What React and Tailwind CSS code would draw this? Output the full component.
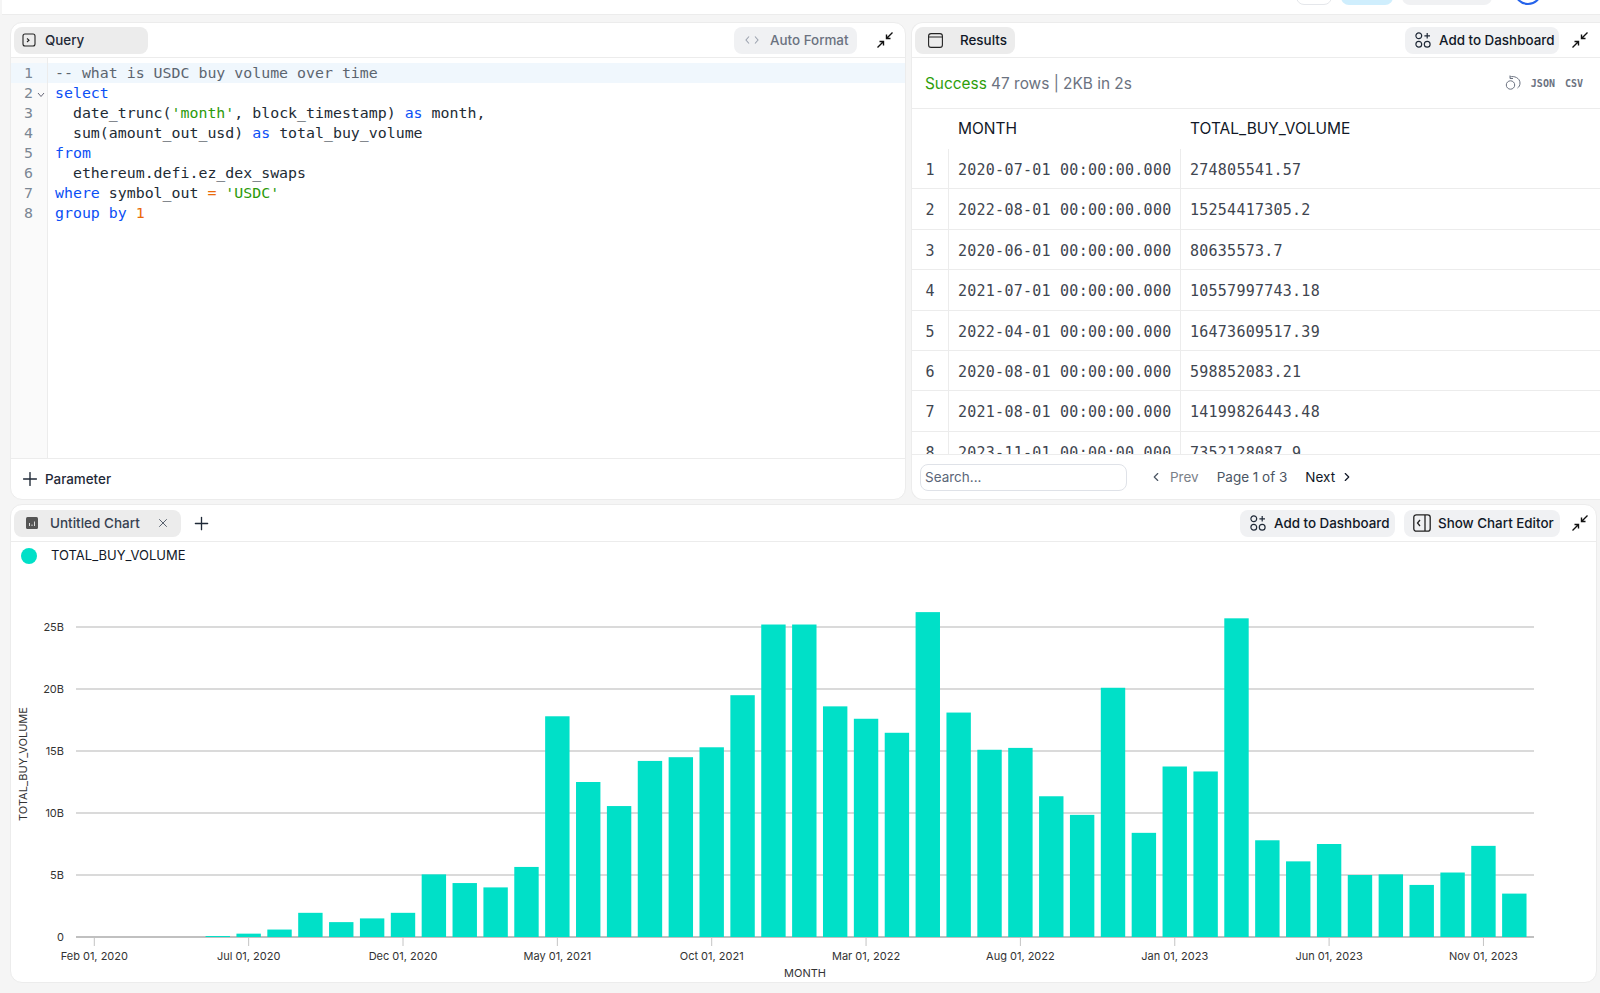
import { Plus, X, ChevronLeft, ChevronRight } from 'lucide-react';

const mono = "font-['DejaVu_Sans_Mono',monospace]";

const BARS = [
  0, 0, 0, 0, 0.08, 0.27, 0.6, 1.95, 1.2, 1.5, 1.95, 5.05, 4.35, 4.0, 5.65, 17.8, 12.5, 10.56, 14.2, 14.5, 15.3, 19.5, 25.2, 25.2,
  18.6, 17.6, 16.47, 26.2, 18.1, 15.1, 15.25, 11.35, 9.85, 20.1, 8.4, 13.75, 13.35, 25.7, 7.8, 6.1, 7.5, 5.0, 5.05, 4.2, 5.2, 7.35, 3.5,
];

const XLABELS = [
  ['Feb 01, 2020', 0], ['Jul 01, 2020', 5], ['Dec 01, 2020', 10], ['May 01, 2021', 15], ['Oct 01, 2021', 20],
  ['Mar 01, 2022', 25], ['Aug 01, 2022', 30], ['Jan 01, 2023', 35], ['Jun 01, 2023', 40], ['Nov 01, 2023', 45],
];

const ROWS = [
  ['2020-07-01 00:00:00.000', '274805541.57'],
  ['2022-08-01 00:00:00.000', '15254417305.2'],
  ['2020-06-01 00:00:00.000', '80635573.7'],
  ['2021-07-01 00:00:00.000', '10557997743.18'],
  ['2022-04-01 00:00:00.000', '16473609517.39'],
  ['2020-08-01 00:00:00.000', '598852083.21'],
  ['2021-08-01 00:00:00.000', '14199826443.48'],
  ['2023-11-01 00:00:00.000', '7352128087.9'],
];

const kw = 'text-[#0b4ff5]';
const str = 'text-[#2b9a0a]';
const op = 'text-[#ea6a0a]';

const CODE = [
  [['-- what is USDC buy volume over time', 'text-[#5c6570]']],
  [['select', kw]],
  [['  date_trunc('], ["'month'", str], [', block_timestamp) '], ['as', kw], [' month,']],
  [['  sum(amount_out_usd) '], ['as', kw], [' total_buy_volume']],
  [['from', kw]],
  [['  ethereum.defi.ez_dex_swaps']],
  [['where', kw], [' symbol_out '], ['=', op], [' '], ["'USDC'", str]],
  [['group by', kw], [' '], ['1', op]],
];

const Collapse = () => (
  <svg width="16" height="16" viewBox="0 0 16 16" fill="none" stroke="#111" strokeWidth="1.4" className="shrink-0">
    <path d="M15.5 0.5 L9.5 6.5 M9.5 2.5 V6.5 H13.5" />
    <path d="M0.5 15.5 L6.5 9.5 M2.5 9.5 H6.5 V13.5" />
  </svg>
);

const DashIcon = () => (
  <svg width="16" height="16" viewBox="0 0 16 16" fill="none" stroke="#1f2937" strokeWidth="1.2" className="shrink-0">
    <circle cx="3.8" cy="3.8" r="2.9" />
    <circle cx="3.8" cy="12.2" r="2.9" />
    <circle cx="12.2" cy="12.2" r="2.9" />
    <path d="M12.2 1 V6.6 M9.4 3.8 H15" />
  </svg>
);

const Btn = ({ children, className = '' }) => (
  <div className={`flex h-[27px] items-center rounded-lg bg-[#f0f1f3] text-[13.4px] font-medium text-[#111827] ${className}`}>{children}</div>
);

const QueryPanel = () => (
  <section className="flex h-[478px] w-[896px] shrink-0 flex-col overflow-hidden rounded-xl border border-[#ececec] bg-white">
    <header className="flex h-[35px] shrink-0 items-center justify-between border-b border-[#ececec] pl-[3px] pr-[12px]">
      <div className="flex h-[27px] w-[134px] items-center gap-[9px] rounded-lg bg-[#ececec] pl-[8px] text-[13.4px] font-medium text-[#1f2937]">
        <svg width="14" height="14" viewBox="0 0 14 14" fill="none" stroke="#222" strokeWidth="1.1">
          <rect x="1" y="1" width="12" height="12" rx="2" />
          <path d="M5 5.5 L7 7.2 L5 9" />
        </svg>
        Query
      </div>
      <div className="flex items-center gap-[20px]">
        <Btn className="w-[123px] gap-[11px] pl-[11px] text-[#6b7280]">
          <svg width="14" height="10" viewBox="0 0 14 10" fill="none" stroke="#9ca3af" strokeWidth="1.1">
            <path d="M4 1.5 L1 5 L4 8.5 M10 1.5 L13 5 L10 8.5" />
          </svg>
          <span className="text-[#6b7280]">Auto Format</span>
        </Btn>
        <Collapse />
      </div>
    </header>
    <div className="flex min-h-0 flex-1">
      <div className="w-[37px] shrink-0 border-r border-[#ececec] bg-[#fafafa] pt-[5px]">
        {CODE.map((_, i) => (
          <div key={i} className={`relative h-[20px] pr-[14px] text-right text-[14.9px] leading-[20px] text-[#7b8794] ${mono} ${i === 0 ? 'bg-[#f0f7fd]' : ''}`}>
            {i + 1}
            {i === 1 && (
              <svg width="8" height="6" viewBox="0 0 8 6" fill="none" stroke="#667" strokeWidth="1" className="absolute right-[2px] top-[9px]">
                <path d="M1 1 L4 4.5 L7 1" />
              </svg>
            )}
          </div>
        ))}
      </div>
      <div className="min-w-0 flex-1 pt-[5px]">
        {CODE.map((line, i) => (
          <div key={i} className={`h-[20px] whitespace-pre pl-[7px] text-[14.9px] leading-[20px] text-[#222b35] ${mono} ${i === 0 ? 'bg-[#f0f7fd]' : ''}`}>
            {line.map(([t, c], j) => (
              <span key={j} className={c}>{t}</span>
            ))}
          </div>
        ))}
      </div>
    </div>
    <footer className="flex h-[41px] shrink-0 items-center gap-[4px] border-t border-[#ececec] pl-[8px] text-[13.4px] font-medium text-[#1f2937]">
      <Plus size={22} strokeWidth={1.5} />
      Parameter
    </footer>
  </section>
);

const ResultsPanel = () => (
  <section className="flex h-[478px] min-w-0 flex-1 flex-col overflow-hidden rounded-l-xl border border-r-0 border-[#ececec] bg-white">
    <header className="flex h-[35px] shrink-0 items-center justify-between border-b border-[#ececec] pl-[3px] pr-[12px]">
      <div className="flex h-[27px] w-[100px] items-center gap-[17px] rounded-lg bg-[#ececec] pl-[13px] text-[13.4px] font-medium text-[#111827]">
        <svg width="15" height="15" viewBox="0 0 15 15" fill="none" stroke="#222" strokeWidth="1.1">
          <rect x="0.6" y="0.6" width="13.8" height="13.8" rx="2.5" />
          <path d="M0.6 4 H14.4" />
        </svg>
        Results
      </div>
      <div className="flex items-center gap-[13px]">
        <Btn className="w-[154px] gap-2 pl-[10px]">
          <DashIcon />
          Add to Dashboard
        </Btn>
        <Collapse />
      </div>
    </header>
    <div className="flex h-[51px] shrink-0 items-center justify-between border-b border-[#ececec] pl-[13px] pr-[17px]">
      <div className="pt-[1px] text-[15.4px] text-[#6b7280]">
        <span className="text-[#2e9e0b]">Success</span> 47 rows | 2KB in 2s
      </div>
      <div className="flex items-center gap-[10px] text-[#6b7280]">
        <svg width="16" height="16" viewBox="0 0 16 16" fill="none" stroke="#6b7280" strokeWidth="1">
          <path d="M5 2 C9 0.5 15 3 15 8 C15 10.5 14 12 12.5 13" />
          <path d="M5 0.5 V3.5 H8" />
          <circle cx="5.5" cy="10" r="4.2" />
        </svg>
        <span className={`text-[10px] font-bold ${mono}`}>JSON</span>
        <span className={`text-[10px] font-bold ${mono}`}>CSV</span>
      </div>
    </div>
    <div className="min-h-0 flex-1 overflow-hidden">
      <div className="grid h-[40px] grid-cols-[36px_232px_1fr] items-center text-[15.5px] text-[#111827]">
        <span />
        <span className="pl-[10px]">MONTH</span>
        <span className="pl-[10px]">TOTAL_BUY_VOLUME</span>
      </div>
      {ROWS.map((r, i) => (
        <div key={i} className={`grid h-[40.4px] grid-cols-[36px_232px_1fr] border-b border-[#ececec] pt-[3px] text-[15px] text-[#3f4650] ${mono}`}>
          <span className="flex items-center justify-center">{i + 1}</span>
          <span className="-mt-[3px] flex items-center border-l border-[#ececec] pl-[9px] pt-[3px] tracking-[0.25px]">{r[0]}</span>
          <span className="-mt-[3px] flex items-center border-l border-[#ececec] pl-[9px] pt-[3px] tracking-[0.25px]">{r[1]}</span>
        </div>
      ))}
    </div>
    <footer className="flex h-[45px] shrink-0 items-center border-t border-[#ececec] pl-[8px] text-[13.5px]">
      <input
        readOnly
        placeholder="Search..."
        className="h-[27px] w-[207px] rounded-lg border border-[#dfe2e8] pb-[1px] pl-[4px] text-[13.5px] placeholder:text-[#5b6678]"
      />
      <ChevronLeft size={14} className="ml-[22px] text-[#4b5563]" />
      <span className="ml-[7px] text-[#7b8088]">Prev</span>
      <span className="ml-[18px] text-[#4b5563]">Page 1 of 3</span>
      <span className="ml-[18px] text-[#111827]">Next</span>
      <ChevronRight size={14} className="ml-[5px] text-[#111827]" />
    </footer>
  </section>
);

const Chart = () => {
  const cx = (i) => 94.3 + 30.87 * i;
  const y0 = 937;
  const perB = 12.4;
  return (
    <svg viewBox="11 570 1585 413" className="block h-[413px] w-[1585px] shrink-0 font-['Inter',sans-serif]">
      {[5, 10, 15, 20, 25].map((v) => (
        <line key={v} x1="76" x2="1534" y1={y0 - v * perB} y2={y0 - v * perB} stroke="#b5b5b5" strokeWidth="1.2" />
      ))}
      {[0, 5, 10, 15, 20, 25].map((v) => (
        <text key={v} x="64" y={y0 - v * perB + 4} textAnchor="end" fontSize="11" fill="#333">
          {v === 0 ? '0' : `${v}B`}
        </text>
      ))}
      {XLABELS.map(([t, i]) => (
        <g key={t}>
          <line x1={cx(i)} x2={cx(i)} y1={y0} y2={y0 + 9} stroke="#c4c4c4" />
          <text x={cx(i)} y="960" textAnchor="middle" fontSize="11" fill="#333">{t}</text>
        </g>
      ))}
      <line x1="76" x2="1534" y1={y0} y2={y0} stroke="#c0c0c0" strokeWidth="2" />
      {BARS.map((v, i) => (
        <rect key={i} x={cx(i) - 12.2} y={y0 - v * perB} width="24.4" height={v * perB} fill="#00e0c8" />
      ))}
      <text x="805" y="977" textAnchor="middle" fontSize="11" fill="#333">MONTH</text>
      <text transform="translate(27 764) rotate(-90)" textAnchor="middle" fontSize="11" fill="#333">TOTAL_BUY_VOLUME</text>
    </svg>
  );
};

const ChartPanel = () => (
  <section className="mr-[3px] mt-[4px] flex h-[479px] flex-col overflow-hidden rounded-xl border border-[#ececec] bg-white">
    <header className="flex h-[37px] shrink-0 items-center justify-between border-b border-[#ececec] pl-[3px] pr-[8px]">
      <div className="flex items-center gap-[10px]">
        <div className="flex h-[27px] w-[167px] items-center rounded-lg bg-[#ececec] pl-[12px] text-[13.5px] font-medium text-[#374151]">
          <svg width="12" height="12" viewBox="0 0 12 12" className="shrink-0">
            <rect width="12" height="12" rx="1.5" fill="#555" />
            <path d="M3.5 6 V9 M6 7.5 V9 M8.5 4.5 V9" stroke="#ddd" strokeWidth="1" />
          </svg>
          <span className="ml-[12px]">Untitled Chart</span>
          <X size={14} strokeWidth={1.4} className="ml-[16px] text-[#374151]" />
        </div>
        <Plus size={21} strokeWidth={1.5} className="text-[#1f2937]" />
      </div>
      <div className="flex items-center gap-[12px]">
        <div className="flex gap-[9px]">
          <Btn className="w-[155px] gap-2 pl-[10px]">
            <DashIcon />
            Add to Dashboard
          </Btn>
          <Btn className="w-[156px] gap-[7px] pl-[9px]">
            <svg width="18" height="18" viewBox="0 0 18 18" fill="none" stroke="#222" strokeWidth="1.3" className="shrink-0">
              <rect x="0.8" y="0.8" width="16.4" height="16.4" rx="2.5" />
              <path d="M12 1 V17 M7 6 L4.5 9 L7 12" />
            </svg>
            Show Chart Editor
          </Btn>
        </div>
        <Collapse />
      </div>
    </header>
    <div className="flex h-[28px] shrink-0 items-center gap-[14px] pl-[10px] text-[13px] text-[#111827]">
      <span className="h-4 w-4 rounded-full bg-[#00e0c8]" />
      TOTAL_BUY_VOLUME
    </div>
    <Chart />
  </section>
);

export default function App() {
  return (
    <div className="flex h-[993px] flex-col overflow-hidden bg-[#f5f5f5] font-['Inter',sans-serif]">
      <div className="ml-[2px] flex h-[15px] shrink-0 items-start overflow-hidden border-b border-[#ececec] bg-white">
        <div className="ml-auto mr-[58px] flex items-end gap-[9px]">
          <span className="-mt-[20px] h-[25px] w-[36px] rounded-lg border border-[#e5e7eb] bg-white" />
          <span className="-mt-[20px] h-[24px] w-[52px] rounded-lg bg-[#cfeefd]" />
          <span className="-mt-[20px] h-[24px] w-[90px] rounded-lg bg-[#f0f1f3]" />
          <span className="-mt-[24px] ml-[13px] h-[28px] w-[28px] rounded-full border-2 border-[#2563eb]" />
        </div>
      </div>
      <main className="pl-[10px] pt-[7px]">
        <div className="flex gap-[5px]">
          <QueryPanel />
          <ResultsPanel />
        </div>
        <ChartPanel />
      </main>
    </div>
  );
}
